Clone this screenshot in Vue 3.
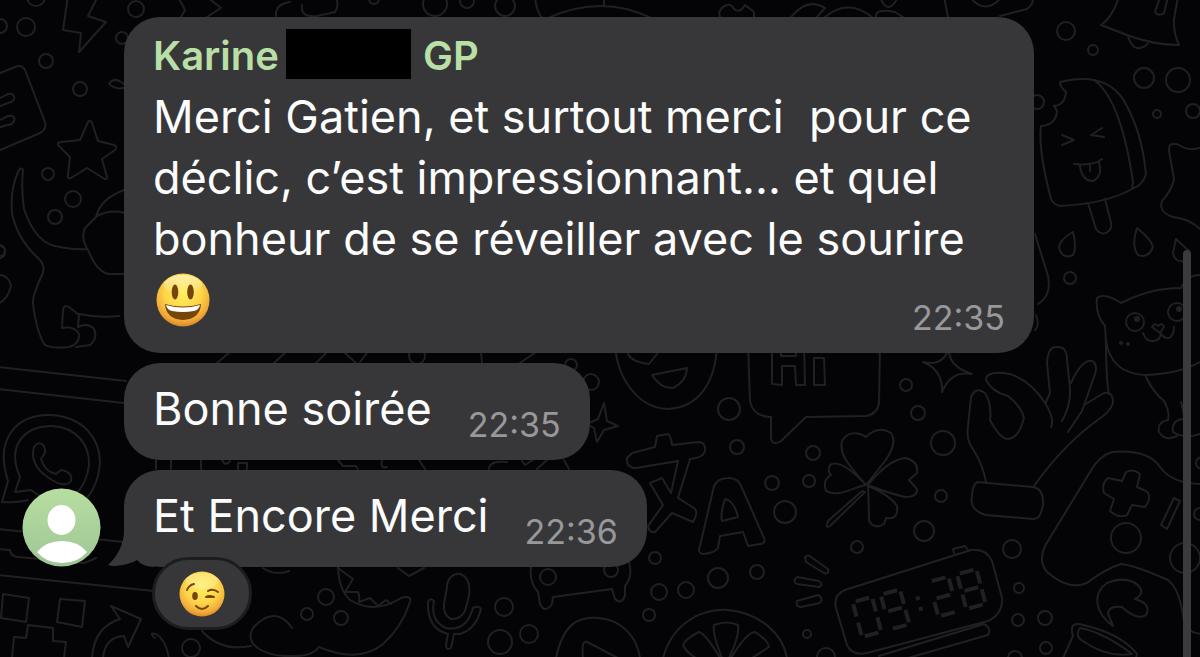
<script setup>
const messages = [
  {
    id: 1,
    author: true,
    text: 'Merci Gatien, et surtout merci\u00a0 pour ce déclic, c’est impressionnant... et quel bonheur de se réveiller avec le sourire',
    smile: true,
    time: '22:35',
  },
  { id: 2, text: 'Bonne soirée', time: '22:35' },
  { id: 3, text: 'Et Encore Merci', time: '22:36', avatar: true, reaction: true },
]

const dots = [
  [36, -3, 9], [26, 27, 9], [0, 26, 7], [136, 9, 8], [46, 61, 7], [80, 89, 7], [122, 38, 6],
  [48, 174, 6], [73, 199, 8], [55, 217, 7], [0, 251, 5], [435, 4, 12], [467, 1, 7], [505, 6, 10],
  [374, -1, 5], [1066, 31, 9], [1093, 50, 5], [1144, 78, 10], [1178, 80, 12], [1157, 114, 4], [1193, 111, 7],
  [1037, 102, 7], [1070, 278, 6], [571, 365, 6], [591, 382, 8], [417, 356, 8], [729, 409, 11], [737, 447, 7],
  [813, 453, 7], [809, 481, 6], [772, 483, 7], [785, 512, 11], [857, 547, 6], [906, 385, 6],
  [918, 413, 7], [943, 443, 12], [941, 496, 6], [924, 531, 10], [1012, 549, 9], [1019, 588, 5],
  [1018, 620, 6], [1045, 618, 7], [1046, 648, 6], [1015, 658, 7], [718, 578, 10], [757, 572, 7],
  [686, 590, 8], [659, 592, 8], [649, 615, 6], [655, 558, 6], [807, 634, 4], [826, 657, 9],
  [504, 607, 9], [529, 634, 9], [500, 642, 12], [548, 577, 8], [611, 570, 7], [326, 597, 8],
  [307, 614, 6], [341, 618, 7], [191, 648, 9], [1126, 538, 15], [1185, 558, 15], [1202, 463, 6], [1200, 514, 6],
]

const outlines = [
  // lightning, note sheet, star
  'M68 -4L63 30L81 33L79 52L106 22L88 16L98 -4',
  'M-2 74L15 67Q22 64 25 70L45 122Q47 129 40 133L-2 151M-2 99L8 94Q15 93 14 99Q13 102 8 103L-2 107M-2 121L8 116Q16 115 14 121Q12 125 7 125L-2 128',
  'M88 122Q90 119 92 123L98 141L114 145Q118 147 115 150L102 159L107 177Q107 181 103 178L87 168L71 178Q67 179 68 175L70 157L58 145Q57 142 61 142L80 140Z',
  // dog
  'M23 170Q21 166 18 172Q10 190 12 213Q17 239 39 259Q46 266 42 275Q32 296 33 304Q36 330 44 344Q50 349 69 347Q80 344 79 334Q75 326 62 328L63 310Q64 304 69 307L79 315L78 327Q88 322 94 329Q98 338 90 345L76 347M23 170Q21 189 24 209Q36 245 60 247Q76 250 87 249M124 190Q100 199 96 217L85 228Q80 238 89 252Q97 272 109 274L124 274M97 216Q110 209 125 213M79 314Q98 318 119 316',
  'M109 84Q114 77 121 82L127 86Q119 92 109 84M0 245Q7 247 4 256L-2 260M-2 275Q9 275 11 286Q8 299 -2 304',
  // phone and chat mark
  'M-2 367L126 381M-2 389L124 403',
  'M2 502L8 481C-6 438 17 414 51 415C84 417 100 439 100 463C98 492 80 512 57 515M2 502Q17 503 28 500',
  'M15 492L20 477C5 443 28 425 52 426C77 427 90 446 89 465C86 492 67 505 48 502L31 490Z',
  'M34 447C39 439 46 445 45 453L41 459Q45 472 56 474L61 470Q73 472 71 481Q65 489 49 478Q29 465 34 447Z',
  'M-2 529L124 542M-2 549L10 550Q11 557 18 557L84 563Q90 561 96 558M-2 575L154 591',
  'M3 594L29 598L26 622L1 618ZM60 599L85 601L82 627L57 622ZM12 658L14 637L26 638L28 625L53 628L53 641L66 642L64 658',
  'M92 658Q94 627 120 619L111 606L141 619L128 647L124 636Q105 637 103 658M155 638Q148 632 156 634Q166 640 169 658',
  'M202 631C217 648 236 649 251 646M292 628C282 613 268 611 253 628C242 647 270 657 292 656Q312 657 319 647C345 658 367 657 383 644Q402 627 410 602Q412 595 401 598C385 608 368 611 350 600Q339 590 338 567',
  'M338 568L353 579L345 592L358 592Q360 596 359 602L370 598L378 606L386 600L391 604',
  // microphone and game controller
  'M451 577Q457 571 464 576Q471 582 469 596L465 611Q460 620 451 619Q443 615 444 604L447 587Q447 581 451 577ZM428 602Q430 597 434 601Q430 621 446 628Q466 632 473 608Q479 605 481 609Q476 629 460 634L454 634L451 648Q446 651 446 645L448 634Q427 629 428 602Z',
  'M531 567Q529 582 538 592L540 604Q545 614 552 604L553 597L612 589L615 599Q621 605 625 596L625 586Q633 577 629 562M398 568L409 576L424 568',
  // emoji, greeting bubble and sparkles
  'M615 340C615 374 635 407 667 409C699 408 716 382 717 344M628 354Q632 362 649 364L660 350M652 375L687 368Q686 382 673 388Q661 389 652 375Z',
  'M748 344L750 402Q754 417 771 417L771 439Q773 446 781 441L806 417L865 416Q877 415 879 403L880 344',
  'M772 345L772 384L782 385L782 366L795 366L796 385L805 385L804 344M781 350L781 356L796 356L796 346M814 358L824 358L825 385L814 385Z',
  'M604 403L607 421L618 426L604 430L597 442L594 428L587 424L598 419Z',
  'M949 347Q947 366 972 374Q951 370 942 392Q943 370 923 362Q944 367 949 347Z',
  // translation letters
  'M657 436L668 434Q671 436 672 445L698 442Q706 442 705 451Q703 458 690 459L678 498L694 508Q699 511 693 522L672 513L655 532Q649 533 648 526L663 505L650 483L662 478L671 493L678 461L636 468Q626 468 627 458L632 453L655 447Z',
  'M714 486Q718 478 728 478Q738 477 742 488L764 538Q766 544 760 544L748 546L743 532L720 536L718 548Q715 553 703 554Q697 553 700 546ZM725 499Q720 514 722 521L738 517Q735 504 728 500Z',
  // clover
  'M866 485C848 464 839 455 842 441C847 431 859 432 866 437Q878 425 891 433Q898 443 885 461ZM866 485C850 468 838 460 830 465Q827 471 831 475Q822 480 826 491C840 498 853 487 866 485ZM868 485Q888 460 905 458Q919 461 917 473L909 480L917 489Q918 497 905 497Q888 493 868 485ZM868 486Q869 510 869 521Q875 530 884 524L886 518Q899 520 897 506Q890 495 868 486ZM862 491L828 521Q825 529 830 526L865 492Z',
  // hand
  'M986 482Q983 465 973 449Q966 441 968 426L971 397Q976 386 985 393Q992 404 990 420Q1000 439 1008 439Q1019 438 1024 418Q1021 406 1008 396Q992 392 986 380Q986 370 1010 374Q1031 381 1045 403Q1055 419 1051 427M1046 402L1050 393L1047 363Q1048 346 1057 347Q1067 346 1067 360L1070 388Q1071 405 1062 421M1071 383Q1082 359 1092 361Q1098 364 1095 374L1082 411L1068 432M1084 405L1104 393Q1113 391 1113 403Q1110 412 1099 419Q1064 444 1034 486M977 482L1033 487Q1044 489 1043 504Q1041 520 1033 519L986 515Q969 510 972 496Q972 486 977 482Z',
  // motion ticks, fruit and clock
  'M805 557Q808 554 811 557L828 569Q829 575 824 573L806 562ZM797 577L819 581Q824 585 819 587L797 584Q792 581 797 577ZM797 601L818 595Q824 598 820 603L801 607Q795 607 797 601Z',
  'M663 658C672 624 701 608 728 610C760 613 783 634 787 658M714 625Q727 620 738 625Q740 635 729 658L722 658Q712 633 714 625ZM720 658Q706 634 699 632Q685 639 683 645Q687 653 696 658M731 658Q747 632 755 632Q768 640 769 647L752 658',
  'M556 658C563 625 577 616 599 618C622 620 637 637 640 658M583 658Q581 640 587 642L618 658',
  'M845 590L971 550Q986 548 992 561L1002 598Q1003 614 988 621L867 653Q852 656 847 645L836 608Q833 595 845 590ZM954 553L953 549L965 546L968 550M879 656L984 624Q992 628 988 635L908 658',
  // bell and ice lolly
  'M1119 -3Q1112 18 1101 25L1127 35Q1153 45 1179 45Q1173 32 1174 19L1178 -3M1160 -3L1155 12Q1158 17 1164 13L1168 -3M1128 36Q1132 50 1140 48Q1147 47 1149 41M1000 16L1027 9Q1034 4 1033 -4',
  'M1060 82C1088 75 1110 80 1123 99C1137 123 1143 145 1146 174Q1143 185 1132 189C1109 202 1080 205 1060 206Q1053 204 1051 199Q1038 150 1041 126Q1056 125 1057 111L1054 106Q1065 105 1066 92Q1060 87 1060 82ZM1094 80C1118 97 1128 148 1133 182L1132 189',
  'M1088 203L1096 229Q1102 237 1109 231Q1113 227 1110 219L1105 199M1062 135L1074 140L1062 145M1102 128L1091 135L1104 137M1074 164Q1094 166 1102 159M1080 166Q1082 181 1093 181Q1103 176 1099 162M1090 165L1090 171',
  'M1073 232Q1059 240 1059 248Q1063 260 1073 255Q1077 248 1073 232ZM1137 228Q1131 246 1138 255Q1148 259 1153 247Q1151 239 1137 228ZM1176 239L1189 251L1185 261Q1175 263 1173 253ZM1035 234L1048 276Q1052 296 1038 304M1036 315Q1040 325 1035 330',
  'M1202 147Q1189 152 1179 145Q1168 141 1169 151L1174 179Q1172 190 1162 201Q1158 212 1173 217Q1191 219 1202 231',
  // kitten
  'M1109 394C1105 373 1107 348 1105 326Q1095 314 1097 298Q1104 292 1121 303Q1150 288 1181 288Q1187 274 1202 275M1143 333Q1146 342 1154 341Q1160 340 1161 334Q1168 342 1172 335Q1174 332 1174 327M1152 327Q1155 322 1158 326Q1162 322 1164 327L1160 333Z',
  'M1106 340Q1110 373 1145 375Q1180 374 1202 361M1146 377Q1153 392 1164 401Q1170 412 1168 420Q1157 422 1159 432Q1165 442 1177 436M1181 402L1186 424M1185 419Q1171 419 1173 432Q1186 440 1202 433',
  // gamepad
  'M1202 484Q1172 484 1160 467Q1148 449 1112 452Q1099 456 1090 472L1045 546Q1038 561 1047 572Q1069 591 1087 583Q1105 569 1121 564Q1134 565 1168 580Q1180 589 1184 622Q1187 633 1202 634',
  'M1122 481L1126 472Q1133 468 1140 474L1137 487L1146 491Q1153 496 1145 507L1132 505L1127 515Q1119 519 1110 511L1114 499L1104 493Q1101 484 1108 478ZM1174 498L1180 501L1167 529L1161 525Z',
  'M1113 626C1096 614 1091 594 1107 583Q1127 575 1139 586Q1145 594 1135 599Q1152 604 1146 615Q1137 621 1122 607Q1109 605 1108 614ZM1063 658L1073 636Q1069 623 1079 624Q1121 633 1137 654L1136 658M1080 628Q1103 632 1132 654Q1107 658 1083 641Q1074 636 1080 628Z',
  // top edge
  'M178 -3L185 10L181 17M207 -3L221 8L207 17M290 2Q275 4 276 16M302 5Q300 18 317 16L335 12Q340 5 335 -3M535 -3Q536 10 542 18M548 18Q602 -6 651 18M604 -3L604 6M720 17Q717 9 727 5Q731 4 734 9Q740 14 745 5L754 12L754 17M791 17Q807 -3 825 8L817 17M825 17Q848 -2 872 17M880 -3Q888 17 898 -3M876 17Q875 8 895 12L903 17M944 -3L948 17M970 -3Q985 16 1002 -3',
  // gaps between bubbles
  'M217 363L230 352M274 363L286 352M316 363L326 353M344 352L356 363M360 362L367 353M482 363L481 352M520 363L536 352M156 460L156 469M171 460L171 469M201 460L201 469M222 460Q225 467 230 461M238 469L238 463L247 463L247 469M338 460L343 466L356 466L358 469M382 461Q380 469 387 467M419 460L425 469M489 469Q490 460 507 462M522 461L525 465L533 460M537 469L547 460M564 460L569 469M263 568Q274 576 289 571',
]

const segments = [
  'M-7 -18H7', 'M10 -16V-3', 'M10 3V16', 'M-7 18H7', 'M-10 3V16', 'M-10 -16V-3', 'M-7 0H7',
]
const digits = [
  { x: 0, on: [0, 1, 2, 3, 4, 5] },
  { x: 29, on: [0, 1, 2, 3, 5, 6] },
  { x: 79, on: [0, 1, 3, 4, 6] },
  { x: 108, on: [0, 1, 2, 3, 4, 5, 6] },
]
</script>

<template>
  <main class="chat">
    <svg class="wallpaper" viewBox="0 0 1200 657" preserveAspectRatio="xMidYMid slice" aria-hidden="true">
      <path v-for="d in outlines" :key="d" :d="d" />
      <circle v-for="([x, y, r], i) in dots" :key="i" :cx="x" :cy="y" :r="r" />
      <circle cx="1135" cy="322" r="9" />
      <circle cx="1177" cy="312" r="9" />
      <circle class="fill" cx="1137" cy="319" r="3" />
      <circle class="fill" cx="1179" cy="309" r="3" />
      <circle class="fill" cx="1121" cy="343" r="2" />
      <circle class="fill" cx="1128" cy="344" r="2" />
      <g class="digits" transform="translate(867 617) rotate(-15)">
        <g v-for="digit in digits" :key="digit.x" :transform="`translate(${digit.x} 0)`">
          <path v-for="s in digit.on" :key="s" :d="segments[s]" />
        </g>
        <path d="M54 -7V-3M54 4V8" />
      </g>
    </svg>

    <section class="thread" aria-label="Messages">
      <article v-for="m in messages" :key="m.id" class="row">
        <div class="side">
          <svg v-if="m.avatar" class="avatar" viewBox="0 0 79 79" role="img" aria-label="Karine GP">
            <defs>
              <linearGradient id="avatar-fill" x1="0" y1="0" x2="0" y2="1">
                <stop offset="0" stop-color="#b7dea0" />
                <stop offset="1" stop-color="#a0c596" />
              </linearGradient>
            </defs>
            <circle cx="39.500" cy="39.500" r="39" fill="url(#avatar-fill)" />
            <ellipse cx="39.500" cy="32" rx="14" ry="15" fill="#fff" />
            <path d="M15 64Q24 53 40 53Q56 53 65 64Q56 75 40 75Q24 75 15 64Z" fill="#fff" />
          </svg>
        </div>

        <div class="bubble" :class="{ long: m.author }">
          <svg v-if="m.avatar" class="tail" viewBox="0 0 46 50" aria-hidden="true">
            <path d="M16 0V15Q15 34 0 48Q4 50 15 48Q24 46 29 43Q35 50 46 50V0Z" fill="#373739" />
          </svg>
          <h2 v-if="m.author" class="name">
            <span>Karine</span><span class="redacted"></span><span>GP</span>
          </h2>
          <p class="text">
            {{ m.text }}
            <svg v-if="m.smile" class="smile" viewBox="0 0 54 54" role="img" aria-label="Smiling face">
              <defs>
                <radialGradient id="smile-fill" cx="50%" cy="36%" r="64%">
                  <stop offset="0" stop-color="#fff05c" />
                  <stop offset=".55" stop-color="#fdd548" />
                  <stop offset=".85" stop-color="#f0a936" />
                  <stop offset="1" stop-color="#d98628" />
                </radialGradient>
                <linearGradient id="smile-shine" x1="0" y1="0" x2="0" y2="1">
                  <stop offset="0" stop-color="#fff6c8" stop-opacity=".8" />
                  <stop offset="1" stop-color="#fff6c8" stop-opacity="0" />
                </linearGradient>
              </defs>
              <circle cx="27" cy="27" r="26.500" fill="url(#smile-fill)" />
              <ellipse cx="27" cy="12" rx="19" ry="10" fill="url(#smile-shine)" />
              <ellipse cx="19" cy="19" rx="3.300" ry="7.500" fill="#754509" />
              <ellipse cx="34.500" cy="19" rx="3.300" ry="7.500" fill="#754509" />
              <path d="M9 31Q27 36 45 31Q44 46 27 47Q10 46 9 31Z" fill="#754509" />
              <path d="M10 32Q27 37 44 32Q43 37 38 38Q27 40 16 38Q11 37 10 32Z" fill="#fff" />
            </svg>
          </p>
          <time class="time">{{ m.time }}</time>

          <button v-if="m.reaction" class="reaction" type="button" aria-label="Winking face reaction">
            <svg viewBox="0 0 46 46" aria-hidden="true">
              <defs>
                <radialGradient id="wink-fill" cx="50%" cy="34%" r="66%">
                  <stop offset="0" stop-color="#fff060" />
                  <stop offset=".55" stop-color="#fdd64a" />
                  <stop offset=".85" stop-color="#f2ad38" />
                  <stop offset="1" stop-color="#dc8a2c" />
                </radialGradient>
              </defs>
              <circle cx="23" cy="23" r="22.500" fill="url(#wink-fill)" />
              <ellipse cx="23" cy="10" rx="16" ry="8" fill="#fff6c8" opacity=".35" />
              <ellipse cx="16" cy="25" rx="2.800" ry="4" fill="#754509" />
              <g fill="none" stroke="#754509" stroke-width="2" stroke-linecap="round">
                <path d="M8 19Q10 14 15 13M29 20Q34 17 39 21M27 26Q30 24 35 26M27 26L35 26M17 35Q23 41 29 35" />
              </g>
            </svg>
          </button>
        </div>
      </article>
    </section>

    <div class="scrollbar" aria-hidden="true"></div>
  </main>
</template>

<style>
body {
  background: #040406;
}
</style>

<style scoped>
.chat {
  position: relative;
  box-sizing: border-box;
  min-height: 100vh;
  padding: 17px 22px 28px;
  overflow: hidden;
  background: #040406;
  color: #fcfcfd;
  font-family: Inter, "Liberation Sans", sans-serif;
}

.wallpaper {
  position: absolute;
  inset: 0;
  width: 100%;
  height: 100%;
  fill: none;
  stroke: #202022;
  stroke-width: 2;
  stroke-linecap: round;
  stroke-linejoin: round;
}

.wallpaper .fill {
  fill: #202022;
  stroke: none;
}

.wallpaper .digits {
  stroke-width: 4;
  stroke-linecap: butt;
}

.thread {
  position: relative;
  display: flex;
  flex-direction: column;
  gap: 10px;
}

.row {
  display: flex;
  align-items: flex-end;
  gap: 23px;
}

.side {
  flex: none;
  width: 79px;
}

.avatar {
  display: block;
  width: 79px;
  height: 79px;
}

.bubble {
  position: relative;
  display: flex;
  align-items: flex-end;
  gap: 36px;
  box-sizing: border-box;
  max-width: 910px;
  padding: 15px 29px 21px;
  border-radius: 36px;
  background: #373739;
}

.bubble.long {
  flex-wrap: wrap;
  justify-content: flex-end;
  gap: 0;
  padding: 12px 29px 17px;
}

.name {
  display: flex;
  align-items: flex-start;
  flex: 1 0 100%;
  margin: 0 0 3px;
  color: #b8dfa6;
  font-size: 40px;
  font-weight: 600;
  line-height: 54px;
}

.redacted {
  width: 125px;
  height: 50px;
  margin: 0 12px 0 7px;
  background: #000;
}

.text {
  margin: 0;
  font-size: 45px;
  line-height: 61px;
}

.long .text {
  flex: 1 0 100%;
  width: 100%;
}

.smile {
  width: 54px;
  height: 54px;
  margin-left: 3px;
  vertical-align: -11px;
}

.time {
  margin-bottom: -4px;
  color: #98989b;
  font-size: 34px;
  line-height: 36px;
}

.long .time {
  margin-top: -30px;
  margin-bottom: 0;
}

.tail {
  position: absolute;
  left: -16px;
  bottom: 0;
  width: 46px;
  height: 50px;
}

.reaction {
  position: absolute;
  left: 28px;
  top: 87px;
  display: flex;
  align-items: center;
  justify-content: center;
  box-sizing: border-box;
  width: 100px;
  height: 73px;
  padding: 0;
  border: 3px solid #1b1e21;
  border-radius: 37px;
  background: #373739;
}

.reaction svg {
  width: 46px;
  height: 46px;
}

.scrollbar {
  position: absolute;
  top: 250px;
  right: 9px;
  bottom: 0;
  width: 8px;
  border-radius: 4px 4px 0 0;
  background: #3b3b3d;
}
</style>
